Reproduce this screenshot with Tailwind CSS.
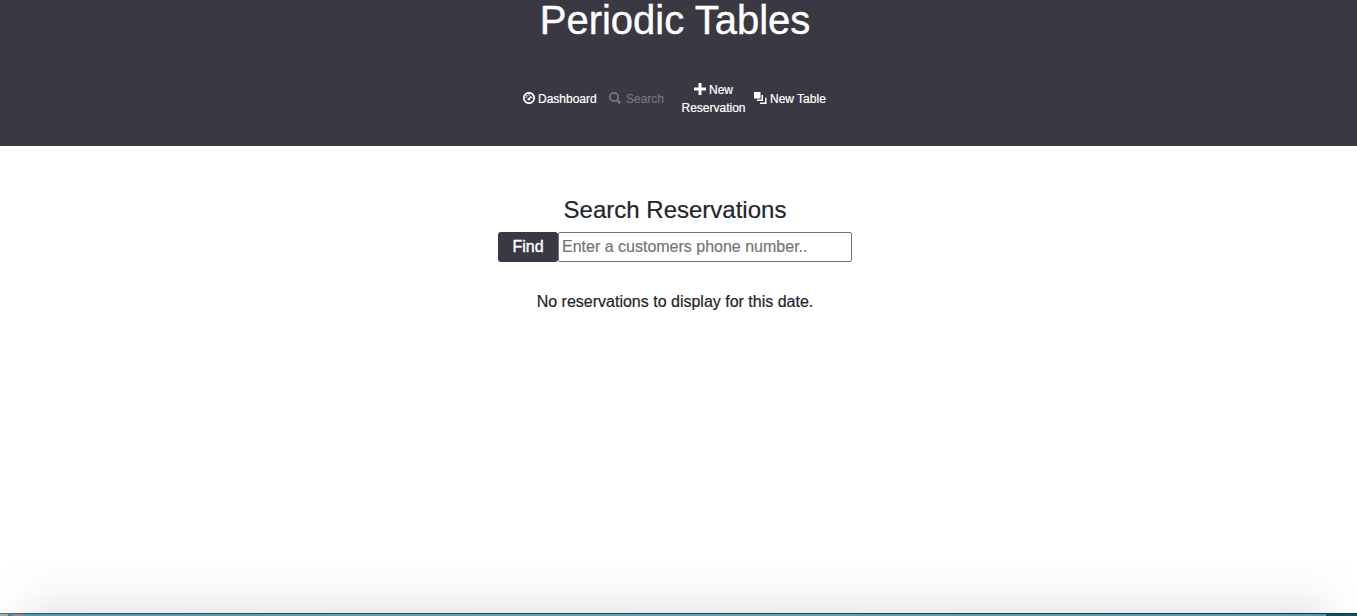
<!DOCTYPE html>
<html lang="en">
<head>
<meta charset="utf-8">
<title>Periodic Tables</title>
<script src="https://cdn.jsdelivr.net/npm/@tailwindcss/browser@4"></script>
</head>
<body class="h-screen overflow-hidden bg-white text-[#212529] font-['Liberation_Sans',Arial,sans-serif] [-webkit-text-stroke:0.2px]">
<div class="flex h-[616px] w-[1357px] flex-col">
  <header class="flex h-[146px] shrink-0 flex-col items-center bg-[#3a3943] pr-[7px] text-white">
    <h1 class="h-[72px] text-[40px] leading-[41px] whitespace-nowrap [-webkit-text-stroke:0.4px]">Periodic Tables</h1>
    <nav class="flex h-[54px] w-[304px] items-center text-xs leading-[18px] whitespace-nowrap">
      <a class="flex w-[86px] shrink-0 items-center gap-[3px]">
        <svg class="mb-0.5 h-3 w-3 shrink-0" viewBox="0 0 12 12" fill="none" stroke="currentColor"><circle cx="6" cy="6" r="5.2" stroke-width="1.7"/><path d="M5.9 7.2 8 4.2" stroke-width="1.3"/><circle cx="5.8" cy="7.3" r="1.3" fill="currentColor" stroke="none"/><path d="M2.5 5.3h1.3M3.4 3.4l1.1.9M8.3 5.6h1.2M5.4 2.9h1.2" stroke-width="1.1"/></svg>
        <span>Dashboard</span>
      </a>
      <a class="flex w-[66px] shrink-0 items-center gap-[5px] text-[#777679]">
        <svg class="mb-0.5 h-3 w-3 shrink-0" viewBox="0 0 12 12" fill="none" stroke="currentColor"><circle cx="5" cy="5" r="4.2" stroke-width="1.8"/><path d="m8 8 3.2 3.2" stroke-width="2.6"/></svg>
        <span>Search</span>
      </a>
      <a class="flex w-[77px] shrink-0 flex-col items-center">
        <span class="flex items-center gap-[3px]"><svg class="mb-0.5 h-3 w-3 shrink-0" viewBox="0 0 12 12"><path d="M4.5 0h3v4.5H12v3H7.5V12h-3V7.5H0v-3h4.5z" fill="currentColor"/></svg>New</span>
        <span>Reservation</span>
      </a>
      <a class="flex shrink-0 items-center gap-[3px] pl-[2px]">
        <svg class="mb-0.5 h-3 w-[13px] shrink-0" viewBox="0 0 13 12" fill="currentColor"><path d="M0 0h6.5v6.5H0zM7.5 3H9v6H3V7.5h4.5zM11 5.7h1.5V12H6v-1.5h5z"/></svg>
        <span>New Table</span>
      </a>
    </nav>
  </header>
  <main class="flex h-[467px] shrink-0 flex-col">
    <section class="flex h-[404px] flex-col items-center pt-[49px] pr-[7px]">
      <h2 class="h-[37px] text-2xl leading-[29px] whitespace-nowrap">Search Reservations</h2>
      <form class="flex h-[30px] w-[354px]">
        <button type="button" class="w-[60px] rounded-[3px] bg-[#3a3943] text-base leading-[30px] text-white [-webkit-text-stroke:0.4px]">Find</button>
        <input class="h-[30px] w-[294px] rounded-[2px] border border-[#767676] bg-white px-[3px] text-base placeholder:text-[#757575]" placeholder="Enter a customers phone number..">
      </form>
      <p class="mt-[28px] text-base leading-6 whitespace-nowrap">No reservations to display for this date.</p>
    </section>
    <div class="flex h-[63px] bg-linear-to-b from-white from-15% via-[#f8f8f8] via-65% to-[#ececec]">
      <div class="h-full w-[55px] bg-linear-to-r from-white to-white/0"></div>
      <div class="flex-1"></div>
      <div class="h-full w-[55px] bg-linear-to-l from-white to-white/0"></div>
    </div>
  </main>
  <footer class="h-[3px] shrink-0">
    <div class="h-px bg-linear-to-r from-[#63777b] via-[#345260] via-2% to-[#073d4f]"></div>
    <div class="flex h-[2px]">
      <div class="w-2 bg-[#aaaaaa]"></div><div class="w-1 bg-[#408397]"></div><div class="w-3 bg-[#8d8c8c]"></div>
      <div class="flex-1 bg-linear-to-r from-[#5399ad] via-[#6aa1b1] to-[#5598ae]"></div>
      <div class="w-[31px] bg-[#174c61]"></div>
    </div>
  </footer>
</div>
</body>
</html>
